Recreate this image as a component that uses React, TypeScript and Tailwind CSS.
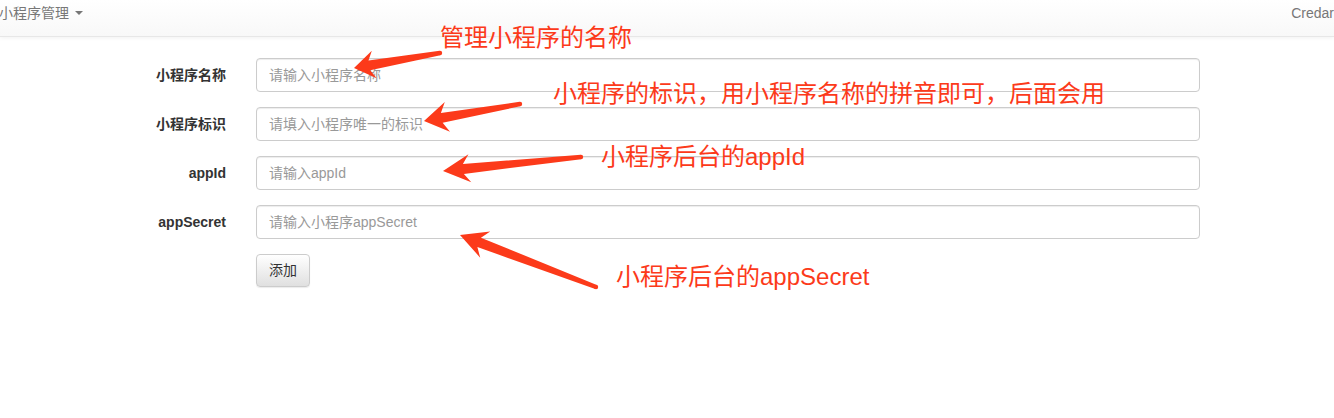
import React from 'react';

type Pt = [number, number];

// tapered "Preview"-style arrow: tip, tail, head length, head half-width, shaft widths
function arrowPoints(tip: Pt, tail: Pt, head: number, half: number, neck: number, end: number) {
  const dx = tail[0] - tip[0];
  const dy = tail[1] - tip[1];
  const len = Math.hypot(dx, dy);
  const ux = dx / len;
  const uy = dy / len;
  const nx = -uy;
  const ny = ux;
  const at = (d: number, w: number): Pt => [tip[0] + ux * d + nx * w, tip[1] + uy * d + ny * w];
  const pts: Pt[] = [
    tip,
    at(head * 1.08, half),
    at(head * 0.82, neck),
    [tail[0] + nx * end, tail[1] + ny * end],
    [tail[0] - nx * end, tail[1] - ny * end],
    at(head * 0.82, -neck),
    at(head * 1.08, -half),
  ];
  return pts.map((p) => p.join(',')).join(' ');
}

const arrows = [
  { tip: [354, 68] as Pt, tail: [440, 53] as Pt, head: 19, half: 14 },
  { tip: [424, 121] as Pt, tail: [520, 104] as Pt, head: 22, half: 15 },
  { tip: [443, 171] as Pt, tail: [581, 157] as Pt, head: 25, half: 14 },
  { tip: [460, 235] as Pt, tail: [596, 287] as Pt, head: 25, half: 14 },
];

const fields = [
  { label: '小程序名称', placeholder: '请输入小程序名称' },
  { label: '小程序标识', placeholder: '请填入小程序唯一的标识' },
  { label: 'appId', placeholder: '请输入appId' },
  { label: 'appSecret', placeholder: '请输入小程序appSecret' },
];

export default function App() {
  return (
    <div
      className="relative w-[1334px] h-[418px] overflow-hidden bg-white text-[14px] text-[#333]"
      style={{ fontFamily: '"Liberation Sans", "Noto Sans CJK SC", sans-serif' }}
    >
      {/* navbar (top part cropped) */}
      <header className="h-[37px] flex items-start justify-between bg-gradient-to-b from-white to-[#f8f8f8] border-b border-[#e7e7e7] shadow-[0_1px_4px_rgba(0,0,0,0.06)]">
        <div className="flex items-center -ml-[1px] pt-[3px] text-[#777]">
          <span className="leading-[20px]">小程序管理</span>
          <span className="ml-[6px] w-0 h-0 border-t-[4px] border-t-[#777] border-x-[4px] border-x-transparent" />
        </div>
        <div className="pt-[3px] text-[#777] leading-[20px] whitespace-nowrap">Credar</div>
      </header>

      {/* form */}
      <form className="mt-[21px] flex flex-col gap-[15px]">
        {fields.map((f) => (
          <div key={f.label} className="flex items-center">
            <label className="w-[226px] text-right font-bold text-[#333]">{f.label}</label>
            <input
              className="ml-[30px] w-[944px] h-[34px] px-[12px] rounded-[4px] border border-[#ccc] bg-white text-[14px] placeholder:text-[#999] shadow-[inset_0_1px_1px_rgba(0,0,0,0.075)] outline-none"
              placeholder={f.placeholder}
            />
          </div>
        ))}
        <div className="flex">
          <button
            type="button"
            className="ml-[256px] w-[54px] h-[33px] rounded-[4px] border border-[#ccc] bg-gradient-to-b from-white to-[#e0e0e0] text-[#333] shadow-[0_1px_1px_rgba(0,0,0,0.08)]"
          >
            添加
          </button>
        </div>
      </form>

      {/* annotations drawn on top */}
      <svg className="absolute inset-0 pointer-events-none" width="1334" height="418">
        {arrows.map((a, i) => (
          <g key={i} fill="#fc3a1a">
            <polygon points={arrowPoints(a.tip, a.tail, a.head, a.half, 5, 2.2)} strokeLinejoin="round" />
            <circle cx={a.tail[0]} cy={a.tail[1]} r={2.2} />
          </g>
        ))}
      </svg>
      <div className="absolute left-[440px] top-[23px] text-[24px] leading-[30px] text-[#fc3a1a] whitespace-nowrap">
        管理小程序的名称
      </div>
      <div className="absolute left-[553px] top-[79px] text-[24px] leading-[30px] text-[#fc3a1a] whitespace-nowrap">
        小程序的标识，用小程序名称的拼音即可，后面会用
      </div>
      <div className="absolute left-[601px] top-[142px] text-[24px] leading-[30px] text-[#fc3a1a] whitespace-nowrap">
        小程序后台的appId
      </div>
      <div className="absolute left-[616px] top-[262px] text-[24px] leading-[30px] text-[#fc3a1a] whitespace-nowrap">
        小程序后台的appSecret
      </div>
    </div>
  );
}
